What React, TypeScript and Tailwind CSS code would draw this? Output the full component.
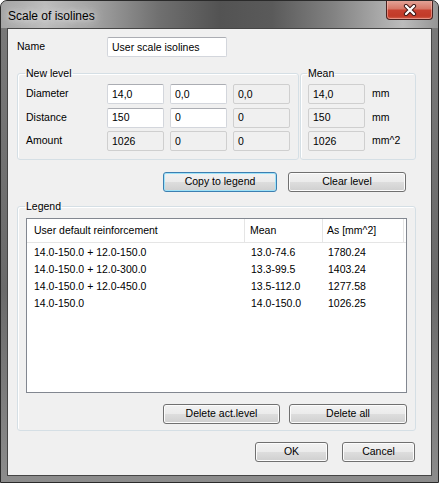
import type { ReactNode } from "react";

const FONT = "font-['Liberation_Sans',Arial,sans-serif]";

type EditProps = { value: string; disabled?: boolean; w?: string };

function Edit({ value, disabled, w = "w-[57px]" }: EditProps) {
  return (
    <div
      className={`flex h-[20px] ${w} items-center rounded-[2px] border pt-[1px] pl-[4px] ${
        disabled
          ? "border-[#cfcfcf] bg-[#f0f0f0] text-[#000]"
          : "border-[#d3d6dc] border-t-[#abadb3] bg-white text-black"
      }`}
    >
      {value}
    </div>
  );
}

type BtnProps = { label: string; w: string; isDefault?: boolean };

function Btn({ label, w, isDefault }: BtnProps) {
  return (
    <button
      type="button"
      className={`flex h-[20px] ${w} items-center justify-center rounded-[3px] border bg-[linear-gradient(to_bottom,#f2f2f2_0%,#ebebeb_48%,#dddddd_52%,#cfcfcf_100%)] text-black ${
        isDefault
          ? "border-[#3c7fb1] shadow-[inset_0_0_0_1px_#9fe2f8]"
          : "border-[#707070] shadow-[inset_0_0_0_1px_#fcfcfc]"
      }`}
    >
      {label}
    </button>
  );
}

function Group({
  title,
  className,
  children,
}: {
  title: string;
  className: string;
  children: ReactNode;
}) {
  return (
    <fieldset
      className={`rounded-[3px] border border-[#d5dfe5] shadow-[inset_1px_1px_0_#fff] ${className}`}
    >
      <legend className="-ml-[1px] px-[1px] leading-[14px] text-black">
        {title}
      </legend>
      {children}
    </fieldset>
  );
}

const levelRows = [
  { label: "Diameter", vals: ["14,0", "0,0", "0,0"], mean: "14,0", unit: "mm" },
  { label: "Distance", vals: ["150", "0", "0"], mean: "150", unit: "mm" },
  { label: "Amount", vals: ["1026", "0", "0"], mean: "1026", unit: "mm^2" },
];

const legendRows = [
  ["14.0-150.0 + 12.0-150.0", "13.0-74.6", "1780.24"],
  ["14.0-150.0 + 12.0-300.0", "13.3-99.5", "1403.24"],
  ["14.0-150.0 + 12.0-450.0", "13.5-112.0", "1277.58"],
  ["14.0-150.0", "14.0-150.0", "1026.25"],
];

export default function App() {
  return (
    <div
      className={`${FONT} relative h-[483px] w-[439px] overflow-hidden rounded-t-[7px] border border-[#2a2a2a] bg-[linear-gradient(to_bottom,#7a7a7a_0%,#6a6a6a_60%,#8c8c8c_100%)] text-[10.5px]`}
    >
      {/* title bar */}
      <div className="flex h-[27px] items-start bg-[linear-gradient(to_right,#a4a4a4_0%,#bdbdbd_10%,#a0a0a0_22%,#707070_36%,#535353_50%,#5a5a5a_62%,#828282_76%,#bcbcbc_92%,#959595_100%)] pr-[5px] pl-[7px]">
        <span className="mt-[7px] text-[12px] leading-[16px] text-black [text-shadow:0_0_6px_#e8e8e8,0_0_12px_#e0e0e0]">
          Scale of isolines
        </span>
        <button
          type="button"
          aria-label="Close"
          className="-mt-[1px] ml-auto flex h-[20px] w-[47px] items-center justify-center rounded-b-[4px] border border-t-0 border-[#4a2220] bg-[linear-gradient(to_bottom,#e4a79c_0%,#d67868_45%,#c7402f_55%,#c23a28_85%,#d2634f_100%)] shadow-[inset_0_0_0_1px_rgba(255,200,190,0.5)]"
        >
          <svg width="14" height="12" viewBox="0 0 14 12" aria-hidden="true">
            <path
              d="M3 2 L11 10 M11 2 L3 10"
              stroke="#3a1412"
              strokeWidth="4.2"
              strokeLinecap="round"
            />
            <path
              d="M3 2 L11 10 M11 2 L3 10"
              stroke="#ffffff"
              strokeWidth="2.4"
              strokeLinecap="round"
            />
          </svg>
        </button>
      </div>

      {/* client area */}
      <div className="mx-[6px] h-[448px] w-[425px] border border-[#454545] bg-[#f0f0f0] text-black">
        <div className="flex items-center pt-[8px] pl-[9px]">
          <span className="w-[90px]">Name</span>
          <Edit value="User scale isolines" w="w-[120px]" />
        </div>

        <div className="mt-[9px] flex pl-[9px]">
          <Group title="New level" className="w-[282px] px-[8px] pt-[4px] pb-[8px]">
            <div className="flex flex-col gap-[3.5px]">
              {levelRows.map((r, i) => (
                <div key={r.label} className="flex items-center">
                  <span className="w-[81px]">{r.label}</span>
                  <div className="flex gap-[6px]">
                    <Edit value={r.vals[0]} disabled={i === 2} />
                    <Edit value={r.vals[1]} disabled={i === 2} />
                    <Edit value={r.vals[2]} disabled />
                  </div>
                </div>
              ))}
            </div>
          </Group>
          <Group title="Mean" className="ml-[1px] w-[116px] pt-[4px] pr-[4px] pb-[8px] pl-[7px]">
            <div className="flex flex-col gap-[3.5px]">
              {levelRows.map((r) => (
                <div key={r.label} className="flex items-center">
                  <Edit value={r.mean} disabled />
                  <span className="ml-[7px]">{r.unit}</span>
                </div>
              ))}
            </div>
          </Group>
        </div>

        <div className="mt-[12px] flex justify-end gap-[11px] pr-[25px]">
          <Btn label="Copy to legend" w="w-[114px]" isDefault />
          <Btn label="Clear level" w="w-[118px]" />
        </div>

        <Group title="Legend" className="mt-[7px] ml-[9px] w-[399px] px-[8px] pt-[5px] pb-[6px]">
          <div className="h-[175px] border border-[#828790] bg-white">
            <div className="grid h-[24px] grid-cols-[218px_78px_81px_1fr] border-b border-[#e5e5e5] bg-white">
              <div className="flex items-center border-r border-[#e5e5e5] pl-[7px]">
                User default reinforcement
              </div>
              <div className="flex items-center border-r border-[#e5e5e5] pl-[5px]">
                Mean
              </div>
              <div className="flex items-center border-r border-[#e5e5e5] pl-[4px]">
                As [mm^2]
              </div>
              <div />
            </div>
            <div className="pt-[1px]">
              {legendRows.map((row) => (
                <div
                  key={row[0]}
                  className="grid h-[17px] grid-cols-[218px_78px_81px] items-center"
                >
                  <span className="pl-[7px]">{row[0]}</span>
                  <span className="pl-[6px]">{row[1]}</span>
                  <span className="pl-[5px]">{row[2]}</span>
                </div>
              ))}
            </div>
          </div>
          <div className="mt-[11px] flex justify-end gap-[9px]">
            <Btn label="Delete act.level" w="w-[117px]" />
            <Btn label="Delete all" w="w-[118px]" />
          </div>
        </Group>

        <div className="mt-[11px] flex justify-end gap-[14px] pr-[16px]">
          <Btn label="OK" w="w-[73px]" />
          <Btn label="Cancel" w="w-[73px]" />
        </div>
      </div>
    </div>
  );
}
